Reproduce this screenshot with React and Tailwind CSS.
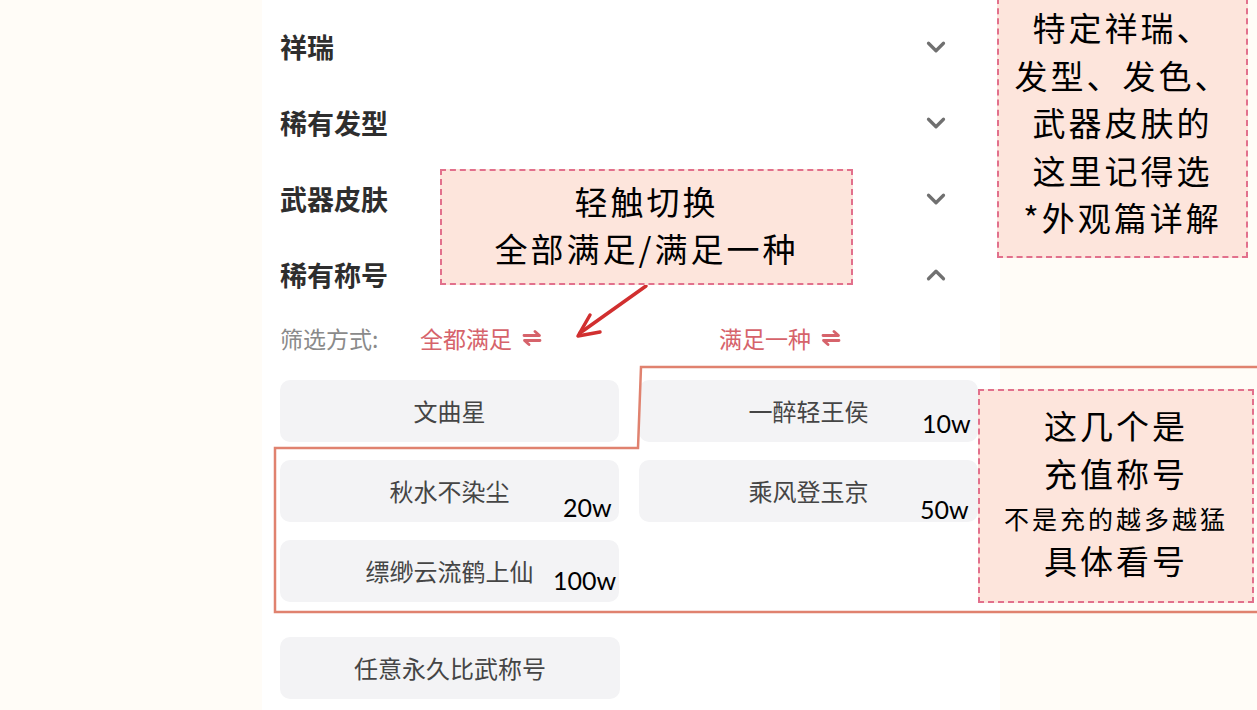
import React from "react";
import { ChevronDown, ChevronUp } from "lucide-react";

const cjk = { fontFamily: '"Noto Sans CJK SC", "Noto Sans", sans-serif' };

function SwapIcon() {
    return (
        <svg width="20" height="16" viewBox="0 0 20 16" fill="none" stroke="#d6636b" strokeWidth="2.8" strokeLinecap="round" strokeLinejoin="round">
            <path d="M2 5.5 H17.5 L13 1.5" />
            <path d="M18 10.5 H2.5 L7 14.5" />
        </svg>
    );
}

function Row({ title, open }) {
    return (
        <div className="h-[76px] flex items-center justify-between">
            <span className="text-[27px] font-bold text-[#2e2e2e]">{title}</span>
            <span className="mr-[27px] flex items-center text-[#707070]">
                {open ? <ChevronUp size={30} strokeWidth={2.6} /> : <ChevronDown size={30} strokeWidth={2.6} />}
            </span>
        </div>
    );
}

function TitleButton({ label }) {
    return (
        <div className="h-[62px] rounded-[10px] bg-[#f3f3f5] flex items-center justify-center text-[24px] text-[#454545]">
            {label}
        </div>
    );
}

const titles = ["文曲星", "一醉轻王侯", "秋水不染尘", "乘风登玉京", "缥缈云流鹤上仙"];

const numbers = [
    { text: "10w", cls: "left-[922px] top-[411px]" },
    { text: "20w", cls: "left-[563px] top-[495px]" },
    { text: "50w", cls: "left-[920px] top-[497px]" },
    { text: "100w", cls: "left-[553px] top-[568px]" }
];

export default function App() {
    return (
        <div className="relative w-[1257px] h-[710px] overflow-hidden bg-[#fffcf7]" style={cjk}>
            {/* panel */}
            <div className="ml-[262px] w-[738px] h-full bg-white pl-[18px] pr-[22px] pt-[9px]">
                <Row title="祥瑞" />
                <Row title="稀有发型" />
                <Row title="武器皮肤" />
                <Row title="稀有称号" open />

                <div className="h-[50px] flex items-center text-[23px]">
                    <span className="w-[140px] text-[#8a8a8a]">筛选方式:</span>
                    <span className="w-[299px] flex items-center gap-[10px] text-[#d6636b]">
                        全都满足 <SwapIcon />
                    </span>
                    <span className="flex items-center gap-[10px] text-[#d6636b]">
                        满足一种 <SwapIcon />
                    </span>
                </div>

                <div className="mt-[17px] grid grid-cols-2 gap-x-[20px] gap-y-[18px]">
                    {titles.map((t) => (
                        <TitleButton key={t} label={t} />
                    ))}
                </div>

                <div className="mt-[35px] w-[340px]">
                    <TitleButton label="任意永久比武称号" />
                </div>
            </div>

            {/* annotation lines */}
            <svg className="absolute left-0 top-0 pointer-events-none" width="1257" height="710" fill="none">
                <polyline
                    points="1260,367 641,367 638,448 275,448 275,612 1260,612"
                    stroke="#e0826f"
                    strokeWidth="2.5"
                />
                <line x1="646" y1="286" x2="580" y2="333" stroke="#d12f2f" strokeWidth="3.5" strokeLinecap="round" />
                <polyline points="590,315 578,336 600,332" stroke="#d12f2f" strokeWidth="3.5" strokeLinecap="round" strokeLinejoin="round" />
            </svg>

            {numbers.map((n) => (
                <span
                    key={n.text}
                    className={"absolute text-[25px] leading-none text-black " + n.cls}
                    style={{ fontFamily: 'Lato, "Open Sans", sans-serif' }}
                >
                    {n.text}
                </span>
            ))}

            {/* note: switch */}
            <div className="absolute left-[440px] top-[169px] w-[413px] h-[116px] border-2 border-dashed border-[#e2708c] bg-[#fde5dc] pt-[7px] flex flex-col items-center text-[33px] tracking-[3px] leading-[47px] text-black">
                <span>轻触切换</span>
                <span>全部满足/满足一种</span>
            </div>

            {/* note: appearance */}
            <div className="absolute left-[997px] top-[-2px] w-[251px] h-[260px] border-2 border-dashed border-[#e2708c] bg-[#fde5dc] pt-[4px] flex flex-col items-center text-[33px] tracking-[3px] leading-[47.5px] text-black">
                <span>特定祥瑞、</span>
                <span>发型、发色、</span>
                <span>武器皮肤的</span>
                <span>这里记得选</span>
                <span>*外观篇详解</span>
            </div>

            {/* note: top-up titles */}
            <div className="absolute left-[978px] top-[389px] w-[276px] h-[214px] border-2 border-dashed border-[#e2708c] bg-[#fde5dc] pt-[10px] flex flex-col items-center text-black tracking-[3px]">
                <span className="text-[33px] leading-[48px]">这几个是</span>
                <span className="text-[33px] leading-[48px]">充值称号</span>
                <span className="text-[25px] leading-[42px]">不是充的越多越猛</span>
                <span className="text-[33px] leading-[42px]">具体看号</span>
            </div>
        </div>
    );
}
